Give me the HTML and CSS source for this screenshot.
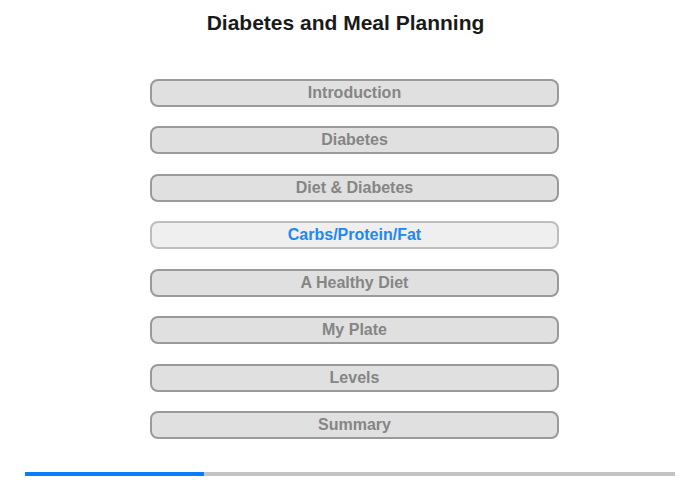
FILE: index.html
```html
<!DOCTYPE html>
<html>
<head>
<meta charset="utf-8">
<link rel="stylesheet" href="styles.css">
</head>
<body>
<div class="page">
  <h1 class="title">Diabetes and Meal Planning</h1>
  <nav class="menu">
    <div class="item">Introduction</div>
    <div class="item">Diabetes</div>
    <div class="item">Diet &amp; Diabetes</div>
    <div class="item active">Carbs/Protein/Fat</div>
    <div class="item">A Healthy Diet</div>
    <div class="item">My Plate</div>
    <div class="item">Levels</div>
    <div class="item">Summary</div>
  </nav>
  <div class="progress"><div class="progress-fill" style="width:179px"></div></div>
</div>
</body>
</html>
```
FILE: styles.css
```css
html, body {
  margin: 0;
  padding: 0;
  background: #ffffff;
}
.page {
  width: 700px;
  height: 480px;
  font-family: "Liberation Sans", Arial, sans-serif;
  display: flex;
  flex-direction: column;
}
.title {
  margin: 11px 0 0 0;
  padding-right: 9px;
  font-size: 21px;
  line-height: 24px;
  font-weight: bold;
  color: #1a1a1a;
  text-align: center;
}
.menu {
  margin: 44px 0 0 150px;
  width: 409px;
  display: flex;
  flex-direction: column;
  gap: 19.43px;
}
.item {
  box-sizing: border-box;
  height: 28px;
  border: 2px solid #9a9a9a;
  border-radius: 8px;
  background: #e0e0e0;
  color: #858585;
  font-size: 16px;
  font-weight: bold;
  line-height: 24px;
  text-align: center;
}
.item.active {
  border-color: #bdbdbd;
  background: #efefef;
  color: #2088f0;
}
.progress {
  margin: 33px 0 0 25px;
  width: 650px;
  height: 4px;
  background: #c4c4c4;
}
.progress-fill {
  height: 100%;
  background: #0a7cf8;
}
```
